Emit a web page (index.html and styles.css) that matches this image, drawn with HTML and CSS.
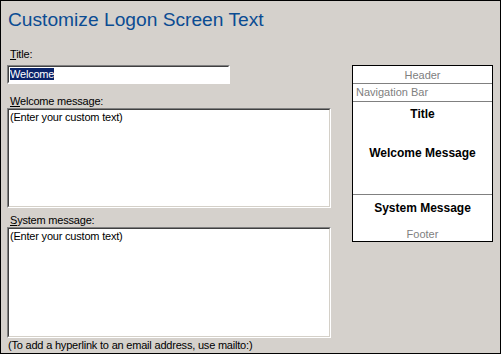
FILE: index.html
```html
<!DOCTYPE html>
<html>
<head>
<meta charset="utf-8">
<link rel="stylesheet" href="styles.css">
</head>
<body>
<div class="frame">
  <h1 class="heading">Customize Logon Screen Text</h1>
  <div class="main">
    <div class="left">
      <div class="label label-title"><u>T</u>itle:</div>
      <div class="field"><span class="sel">Welcome</span></div>
      <div class="label label-welcome"><u>W</u>elcome message:</div>
      <div class="area area-welcome">(Enter your custom text)</div>
      <div class="label label-system"><u>S</u>ystem message:</div>
      <div class="area area-system">(Enter your custom text)</div>
      <div class="hint">(To add a hyperlink to an email address, use mailto:)</div>
    </div>
    <div class="preview">
      <div class="row row-header">Header</div>
      <div class="row row-nav">Navigation Bar</div>
      <div class="pv-title">Title</div>
      <div class="pv-welcome">Welcome Message</div>
      <div class="pv-system">System Message</div>
      <div class="pv-footer">Footer</div>
    </div>
  </div>
</div>
</body>
</html>
```
FILE: styles.css
```css
html, body {
  margin: 0;
  padding: 0;
  background: #d4d0c8;
}
.frame {
  width: 501px;
  height: 354px;
  box-sizing: border-box;
  border: 1px solid #000;
  background: #d5d1cc;
  padding: 7px 7px 0 6px;
  font-family: "Liberation Sans", Arial, sans-serif;
  font-size: 11px;
  letter-spacing: -0.2px;
  color: #000;
}
.heading {
  margin: 0 0 0 1px;
  font-size: 19.2px;
  line-height: 23px;
  font-weight: normal;
  letter-spacing: 0;
  color: #0b4c93;
}
.main {
  display: flex;
  align-items: flex-start;
  gap: 21px;
  margin-top: 17px;
}
.left {
  width: 324px;
  display: flex;
  flex-direction: column;
}
.label {
  line-height: 13px;
  height: 13px;
  padding-left: 3px;
}
.label u {
  text-decoration: underline;
}
.field {
  margin-top: 4px;
  width: 223px;
  height: 19px;
  box-sizing: border-box;
  background: #fff;
  border-style: solid;
  border-width: 2px;
  border-color: #404040 #ffffff #ffffff #404040;
  padding: 1px 0 0 1px;
  line-height: 13px;
  position: relative;
}
.field::before {
  content: "";
  position: absolute;
  inset: -2px;
  border-style: solid;
  border-width: 1px;
  border-color: #808080 #ffffff #ffffff #808080;
  pointer-events: none;
}
.sel {
  background: #0a246a;
  color: #fff;
}
.label-welcome {
  margin-top: 11px;
}
.label-system {
  margin-top: 6px;
}
.area {
  box-sizing: border-box;
  background: #fff;
  border-style: solid;
  border-width: 2px;
  border-color: #404040 #d4d0c8 #d4d0c8 #404040;
  position: relative;
  padding: 1px 0 0 1px;
  line-height: 13px;
}
.area::before {
  content: "";
  position: absolute;
  inset: -2px;
  border-style: solid;
  border-width: 1px;
  border-color: #808080 #ffffff #ffffff #808080;
  pointer-events: none;
}
.area-welcome {
  height: 100px;
}
.area-system {
  height: 111px;
}
.hint {
  line-height: 13px;
  margin-top: 1px;
  padding-left: 1px;
}
.preview {
  margin-top: 17px;
  width: 141px;
  height: 177px;
  box-sizing: border-box;
  border: 1px solid #000;
  background: #fff;
  display: flex;
  flex-direction: column;
  line-height: 13px;
  letter-spacing: 0;
}
.row {
  color: #808080;
  border-bottom: 1px solid #808080;
  box-sizing: border-box;
}
.row-header {
  height: 19px;
  text-align: center;
  padding-top: 3px;
}
.row-nav {
  height: 18px;
  padding: 2px 0 0 3px;
}
.pv-title,
.pv-welcome,
.pv-system {
  font-weight: bold;
  font-size: 12px;
  line-height: 14px;
  text-align: center;
  box-sizing: border-box;
}
.pv-title {
  padding-top: 5px;
  height: 19px;
}
.pv-welcome {
  padding-top: 25px;
  height: 77px;
  border-bottom: 1px solid #808080;
}
.pv-system {
  padding-top: 6px;
  height: 20px;
}
.pv-footer {
  color: #808080;
  text-align: center;
  padding-top: 13px;
}
```
